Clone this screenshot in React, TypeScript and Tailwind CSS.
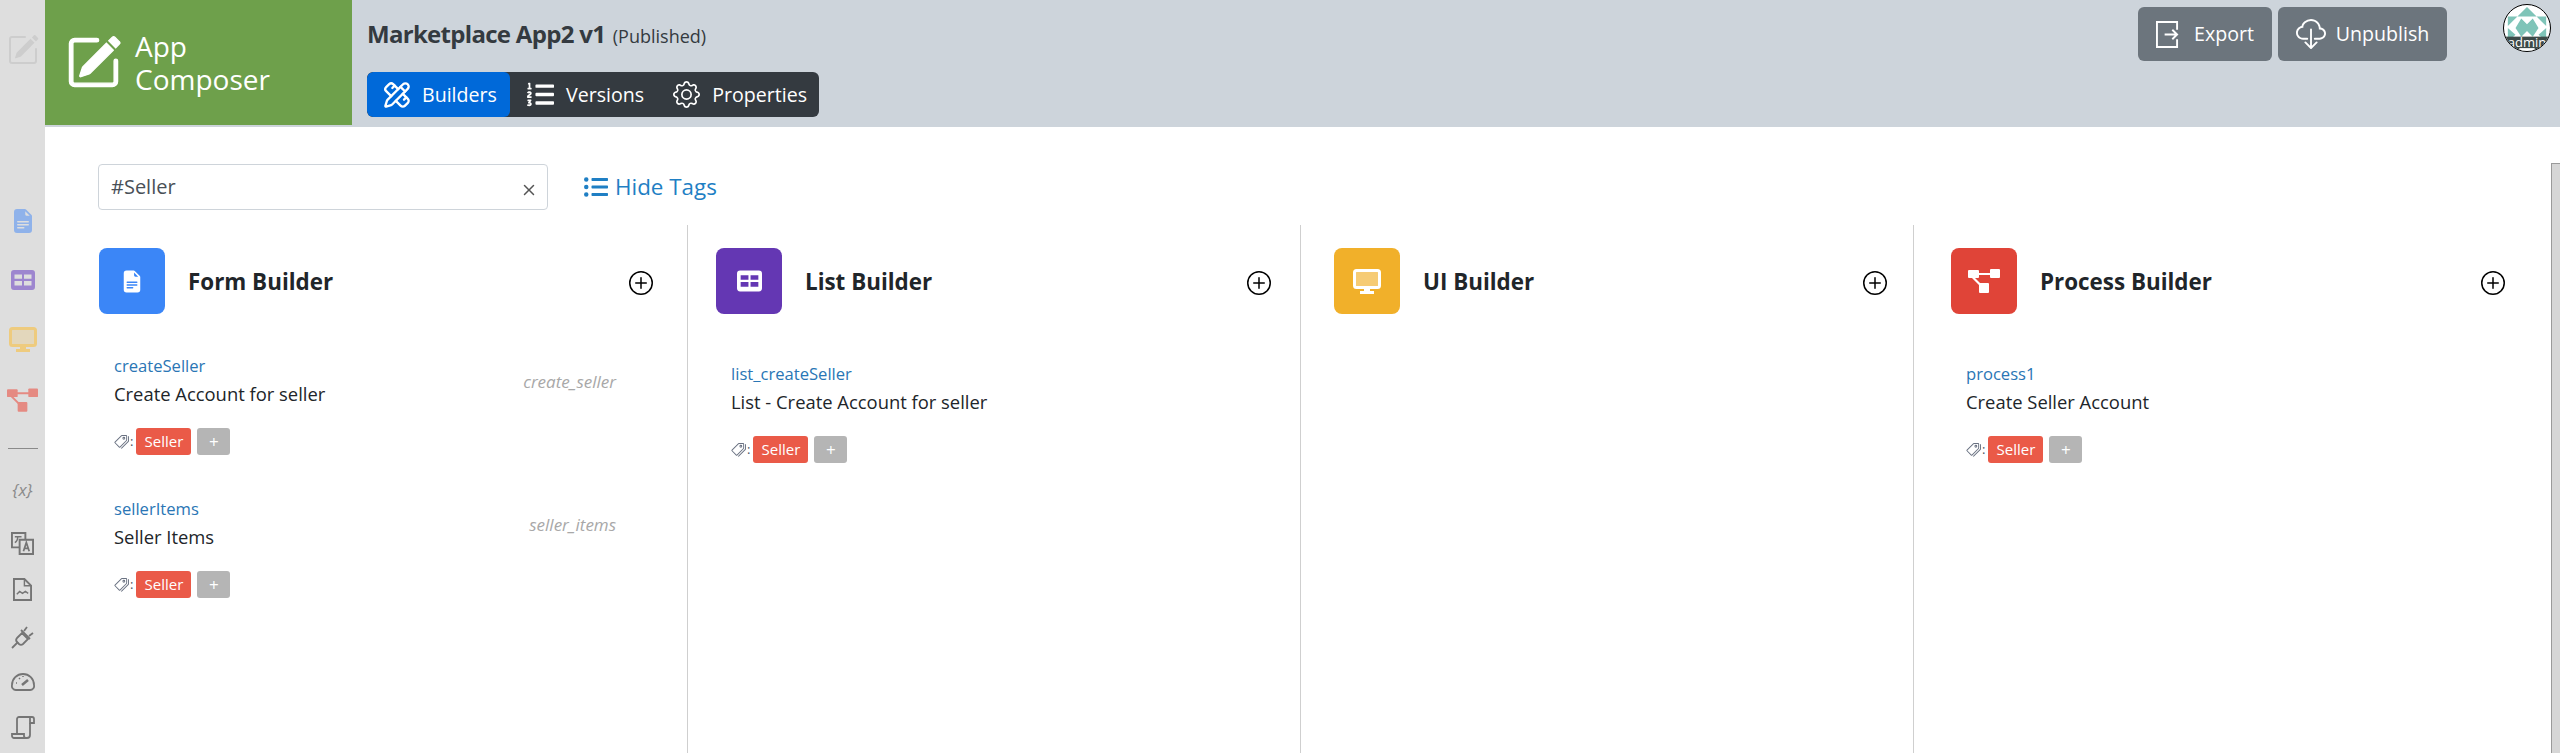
import { BsCloudDownload, BsFileEarmarkTextFill, BsGear, BsPencilSquare, BsPlusCircle, BsTags, BsX } from "react-icons/bs";
import { FaListOl, FaListUl } from "react-icons/fa";
import { LuPencilRuler } from "react-icons/lu";

const font = "font-['Open_Sans',sans-serif]";

const TableIcon = ({ className }: { className?: string }) => (
  <svg viewBox="0 0 24 20" className={className} fill="currentColor">
    <path fillRule="evenodd" d="M3 0h18a3 3 0 0 1 3 3v14a3 3 0 0 1-3 3H3a3 3 0 0 1-3-3V3a3 3 0 0 1 3-3Zm.5 4.500v4.200h7.500V4.500Zm9.500 0v4.200h7.500V4.500Zm-9.500 6.500v4.500h7.500V11Zm9.500 0v4.500h7.500V11Z" />
  </svg>
);

const DisplayIcon = ({ className }: { className?: string }) => (
  <svg viewBox="0 0 28 25" className={className}>
    <rect x="1.500" y="1.500" width="25" height="17" rx="2" fill="currentColor" fillOpacity="0.35" stroke="currentColor" strokeWidth="3" />
    <path d="M11 20h6v2h4v3H7v-3h4z" fill="currentColor" />
  </svg>
);

const ProcessIcon = ({ className }: { className?: string }) => (
  <svg viewBox="0 0 32 24" className={className} fill="currentColor">
    <rect x="0" y="1" width="11" height="8" rx="1" />
    <rect x="22" y="0" width="10" height="9" rx="1" />
    <rect x="11" y="14" width="10" height="10" rx="1" />
    <path d="M9 4h14v2H9zM6 8l8 8-1.500 1.500L4 9z" />
  </svg>
);

const ExportIcon = () => (
  <svg viewBox="0 0 24 28" className="h-[27px] w-[23px]" fill="none" stroke="currentColor" strokeWidth="2">
    <path d="M22 9V1H1v26h21v-8" />
    <path d="M9 14h13M17 9l5 5-5 5" />
  </svg>
);

const TranslateIcon = () => (
  <svg viewBox="0 0 24 24" className="h-[23px] w-[23px]" fill="none" stroke="currentColor" strokeWidth="2">
    <path d="M9 16H1V1h14v7" />
    <path d="M9 8h14v15H9z" />
    <path d="M4 5h7M7 5c0 3-1 5-3 6" strokeWidth="1.500" />
    <path d="M13 20l3-9 3 9M14 17h4" strokeWidth="1.800" />
  </svg>
);

const FileChartIcon = () => (
  <svg viewBox="0 0 20 24" className="h-[23px] w-[19px]" fill="none" stroke="currentColor" strokeWidth="2">
    <path d="M1 1h11l7 7v15H1z" />
    <path d="M12 1v7h7" strokeWidth="1.500" />
    <path d="M4 17l3-3 3 2 3-2 3 2" strokeWidth="1.500" />
  </svg>
);

const PlugIcon = () => (
  <svg viewBox="0 0 24 24" className="h-[24px] w-[24px]" fill="none" stroke="currentColor" strokeWidth="1.800">
    <path d="M1 23l6-6" />
    <path d="M6 13l5-5 6 6-5 5a3 3 0 0 1-4 0l-2-2a3 3 0 0 1 0-4z" />
    <path d="M13 6l3-4M18 11l4-3" />
    <path d="M10 5l9 9" />
  </svg>
);

const GaugeIcon = () => (
  <svg viewBox="0 0 24 20" className="h-[20px] w-[24px]" fill="none" stroke="currentColor" strokeWidth="1.800">
    <path d="M5 19a4 4 0 0 1-4-5 11 11 0 0 1 22 0 4 4 0 0 1-4 5z" />
    <path d="M11 14l6-5" strokeWidth="2.500" />
    <path d="M5 12l1 0M8 7l1 1M12 5v1" strokeWidth="1.500" />
  </svg>
);

const ScrollIcon = () => (
  <svg viewBox="0 0 24 24" className="h-[24px] w-[24px]" fill="none" stroke="currentColor" strokeWidth="1.800">
    <path d="M6 18V3a2 2 0 0 1 2-2h13a2 2 0 0 1 2 2v4h-4V2" />
    <path d="M19 7v12a3 3 0 0 1-3 3H3a2 2 0 0 1-2-2v-2h12v2a2 2 0 0 0 2 2" />
  </svg>
);

const Avatar = () => (
  <div className="relative h-[48px] w-[48px] shrink-0 overflow-hidden rounded-full border border-black bg-white">
    <svg viewBox="0 0 48 48" className="h-full w-full">
      <path fill="#7fc4b8" d="M24 2 34 12H14ZM14 12 4 22V12ZM34 12 44 22V12ZM4 24 12 31 4 38ZM44 24 36 31 44 38ZM18 14 24 20 30 14 36 24 30 33 24 27 18 33 12 24Z" />
      <rect x="0" y="33" width="48" height="15" fill="#3d4a48" />
      <rect x="16" y="45" width="16" height="3" fill="#fff" />
    </svg>
    <span className="absolute inset-x-0 top-[30px] text-center text-[13px] leading-[15px] text-white">admin</span>
  </div>
);

const TagRow = () => (
  <div className="mt-[22px] flex items-center">
    <BsTags className="h-[15px] w-[15px] -scale-x-100 text-gray-500" />
    <span className="ml-[1px] mr-[3px] text-[13px] text-gray-600">:</span>
    <span className="flex h-[27px] w-[55px] items-center justify-center rounded-[3px] bg-[#ea5a48] text-[15px] text-white">Seller</span>
    <span className="ml-[6px] flex h-[27px] w-[33px] items-center justify-center rounded-[3px] bg-[#b5b5b5] text-[17px] text-white">+</span>
  </div>
);

type Item = { name: string; label: string; key2?: string };

const BuilderItem = ({ item }: { item: Item }) => (
  <div className="relative h-[143px]">
    <div className="text-[16.600px] leading-[24px] text-[#2a76b5]">{item.name}</div>
    <div className="mt-[4px] text-[18.400px] leading-[24px] text-[#212529]">{item.label}</div>
    <TagRow />
    {item.key2 && (
      <span className="absolute right-[37px] top-[16px] text-[17px] italic leading-[24px] text-[#a8a8a8]">{item.key2}</span>
    )}
  </div>
);

const Column = ({ title, color, icon, items, pad, listTop, line = true }: { title: string; color: string; icon: React.ReactNode; items: Item[]; pad: string; listTop: string; line?: boolean }) => (
  <div className={`w-[613px] shrink-0 pt-[23px] ${pad} ${line ? "border-r border-[#cfcfcf]" : ""}`}>
    <div className="flex items-center">
      <div className={`flex h-[66px] w-[66px] shrink-0 items-center justify-center rounded-[8px] text-white ${color}`}>{icon}</div>
      <h2 className="ml-[23px] mt-[2px] text-[22.400px] font-bold text-[#212529]">{title}</h2>
      <BsPlusCircle className="ml-auto mt-[4px] h-[24px] w-[24px] text-black" />
    </div>
    <div className={`pl-[15px] ${listTop}`}>
      {items.map((it) => (
        <BuilderItem key={it.name} item={it} />
      ))}
    </div>
  </div>
);

export default function App() {
  return (
    <div className={`flex h-screen w-full overflow-hidden bg-white ${font}`}>
      <aside className="flex w-[45px] shrink-0 flex-col items-center bg-[#dedede] text-[#757575]">
        <BsPencilSquare className="mt-[34px] h-[32px] w-[32px] text-[#cdcdcd]" />
        <BsFileEarmarkTextFill className="mt-[141px] h-[28px] w-[24px] text-[#8fb2ea]" />
        <TableIcon className="mt-[35px] h-[20px] w-[24px] text-[#9d86cf]" />
        <DisplayIcon className="mt-[37px] h-[25px] w-[28px] text-[#eecb7e]" />
        <ProcessIcon className="mt-[36px] h-[24px] w-[31px] text-[#e58a82]" />
        <div className="mt-[36px] h-px w-[30px] bg-[#8a8a8a]" />
        <span className="mt-[29px] text-[17px] italic leading-[24px] text-[#8a8a8a]">{"{x}"}</span>
        <div className="mt-[30px] leading-none"><TranslateIcon /></div>
        <div className="mt-[23px] leading-none"><FileChartIcon /></div>
        <div className="mt-[24px] leading-none"><PlugIcon /></div>
        <div className="mt-[22px] leading-none"><GaugeIcon /></div>
        <div className="mt-[25px] leading-none"><ScrollIcon /></div>
      </aside>
      <div className="flex min-w-0 flex-1 flex-col">
        <header className="flex h-[127px] shrink-0 bg-[#cdd4db]">
          <div className="flex h-[125px] w-[307px] shrink-0 items-center bg-[#6ea04b] pl-[21px] text-white">
            <BsPencilSquare className="h-[55px] w-[55px] stroke-[0.4]" />
            <span className="ml-[14px] text-[28px] leading-[33px]">App<br />Composer</span>
          </div>
          <div className="ml-[15px] pt-[21px]">
            <div className="text-[24px] font-bold leading-[26px] tracking-[-0.7px] text-[#343a40]">
              Marketplace App2 v1 <span className="ml-[2px] text-[18px] font-normal tracking-normal">(Published)</span>
            </div>
            <div className="mt-[23px] flex h-[45px] w-[452px] items-center overflow-hidden rounded-[6px] bg-[#343a40] text-[19.600px] text-white">
              <div className="flex h-full w-[143px] items-center gap-[11px] rounded-[6px] bg-[#0069d9] pl-[16px]">
                <LuPencilRuler className="h-[28px] w-[28px] stroke-2" />
                Builders
              </div>
              <div className="ml-[17px] flex items-center gap-[12px]">
                <FaListOl className="h-[27px] w-[27px]" />
                Versions
              </div>
              <div className="ml-[29px] flex items-center gap-[12px]">
                <BsGear className="h-[27px] w-[27px]" />
                Properties
              </div>
            </div>
          </div>
          <div className="ml-auto mr-[9px] flex items-start pt-[4px]">
            <div className="mt-[3px] flex h-[54px] w-[134px] items-center justify-center gap-[15px] rounded-[6px] bg-[#6c757d] text-[19.600px] text-white">
              <ExportIcon />
              Export
            </div>
            <div className="ml-[6px] mt-[3px] flex h-[54px] w-[169px] items-center justify-center gap-[10px] rounded-[6px] bg-[#6c757d] text-[19.600px] text-white">
              <BsCloudDownload className="h-[30px] w-[30px]" />
              Unpublish
            </div>
            <div className="ml-[56px]"><Avatar /></div>
          </div>
        </header>
        <main className="relative flex min-h-0 flex-1 flex-col pl-[30px]">
          <div className="flex h-[98px] shrink-0 items-start pl-[23px] pt-[37px]">
            <div className="flex h-[46px] w-[450px] items-center justify-between rounded-[4px] border border-[#ced4da] pl-[12px] pr-[6px] text-[20px] text-[#495057]">
              #Seller
              <BsX className="mt-[5px] h-[24px] w-[24px] text-[#555]" />
            </div>
            <div className="ml-[36px] flex h-[46px] items-center gap-[7px] text-[22.400px] text-[#1f7fc4]">
              <FaListUl className="h-[24px] w-[24px]" />
              Hide Tags
            </div>
          </div>
          <div className="flex min-h-0 flex-1">
            <Column
              title="Form Builder"
              color="bg-[#3b86f7]"
              icon={<BsFileEarmarkTextFill className="h-[25px] w-[22px]" />}
              pad="pl-[24px] pr-[34px]"
              listTop="mt-[40px]"
              items={[
                { name: "createSeller", label: "Create Account for seller", key2: "create_seller" },
                { name: "sellerItems", label: "Seller Items", key2: "seller_items" },
              ]}
            />
            <Column
              title="List Builder"
              color="bg-[#6437b3]"
              icon={<TableIcon className="h-[22px] w-[25px]" />}
              pad="pl-[28px] pr-[29px]"
              listTop="mt-[48px]"
              items={[{ name: "list_createSeller", label: "List - Create Account for seller" }]}
            />
            <Column
              title="UI Builder"
              color="bg-[#f1b02a]"
              icon={<DisplayIcon className="h-[25px] w-[28px]" />}
              pad="pl-[33px] pr-[26px]"
              listTop="mt-[48px]"
              items={[]}
            />
            <Column
              line={false}
              title="Process Builder"
              color="bg-[#e04438]"
              icon={<ProcessIcon className="h-[24px] w-[32px]" />}
              pad="pl-[37px] pr-[22px]"
              listTop="mt-[48px]"
              items={[{ name: "process1", label: "Create Seller Account" }]}
            />
          </div>
          <div className="absolute right-0 top-[36px] bottom-0 w-[9px] border-l border-t border-[#9a9a9a] bg-[#d6d6d6]" />
        </main>
      </div>
    </div>
  );
}
